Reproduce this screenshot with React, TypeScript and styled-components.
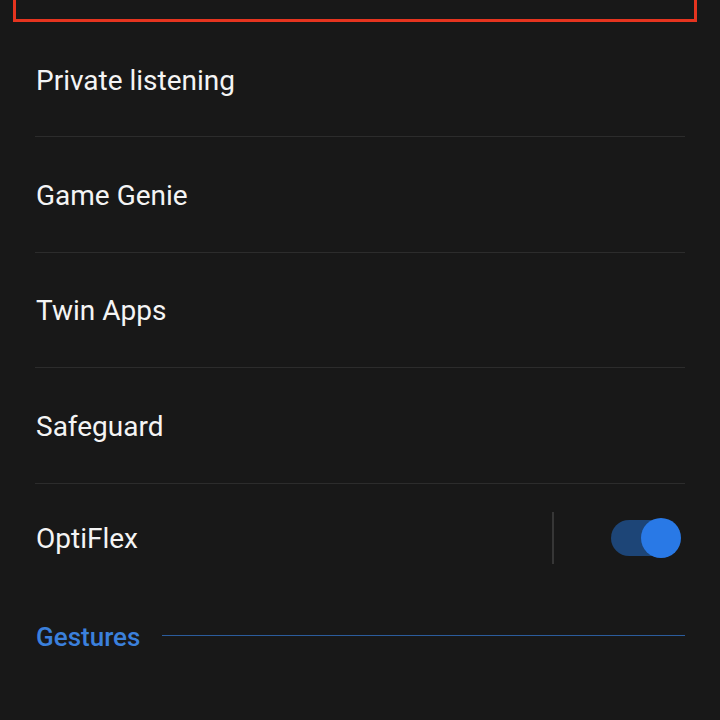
import React from "react";
import styled, { createGlobalStyle } from "styled-components";

const GlobalStyle = createGlobalStyle`
  html, body {
    margin: 0;
    padding: 0;
    background: #181818;
  }
  body {
    font-family: Roboto, "Noto Sans", sans-serif;
    color: #f2f2f2;
    -webkit-font-smoothing: antialiased;
  }
  *, *::before, *::after {
    box-sizing: border-box;
  }
`;

const Screen = styled.div`
  width: 720px;
  height: 720px;
  overflow: hidden;
  background: #181818;
  display: flex;
  flex-direction: column;
`;

const FocusFrame = styled.div`
  margin: 0 23px 0 13px;
  height: 22px;
  border: 3px solid #e5341f;
  border-top: none;
  flex-shrink: 0;
`;

const List = styled.div`
  padding: 0 35px;
  display: flex;
  flex-direction: column;
`;

const Row = styled.div<{ $last?: boolean }>`
  height: ${({ $last }) => ($last ? "114.4px" : "115.4px")};
  display: flex;
  align-items: center;
  padding-bottom: ${({ $last }) => ($last ? "6px" : "0")};
  border-bottom: ${({ $last }) => ($last ? "none" : "1px solid #2c2c2c")};
`;

const Label = styled.span`
  flex: 1;
  font-size: 28px;
  font-weight: 400;
  color: #f4f4f4;
  padding-left: 1px;
  margin-top: 2px;
`;

const Separator = styled.div`
  width: 2px;
  height: 52px;
  background: #363636;
  margin-right: 57px;
`;

const Switch = styled.div<{ $on?: boolean }>`
  position: relative;
  width: 70px;
  height: 40px;
  margin-right: 4px;
  &::before {
    content: "";
    position: absolute;
    left: 0;
    top: 2px;
    width: 58px;
    height: 36px;
    border-radius: 18px;
    background: ${({ $on }) => ($on ? "#1d4577" : "#444")};
  }
  &::after {
    content: "";
    position: absolute;
    top: 0;
    left: ${({ $on }) => ($on ? "30px" : "0")};
    width: 40px;
    height: 40px;
    border-radius: 50%;
    background: ${({ $on }) => ($on ? "#2979e6" : "#bbb")};
  }
`;

const SectionHeader = styled.div`
  display: flex;
  align-items: center;
  gap: 22px;
  height: 76px;
  margin-top: 1px;
`;

const SectionTitle = styled.span`
  font-size: 26px;
  font-weight: 500;
  color: #3b80dc;
  padding-left: 1px;
`;

const SectionLine = styled.div`
  flex: 1;
  height: 1px;
  background: #2b5c9c;
  margin-top: -3px;
`;

const items = ["Private listening", "Game Genie", "Twin Apps", "Safeguard"];

export default function App() {
  return (
    <Screen>
      <GlobalStyle />
      <FocusFrame />
      <List>
        {items.map((name) => (
          <Row key={name}>
            <Label>{name}</Label>
          </Row>
        ))}
        <Row $last>
          <Label>OptiFlex</Label>
          <Separator />
          <Switch $on />
        </Row>
        <SectionHeader>
          <SectionTitle>Gestures</SectionTitle>
          <SectionLine />
        </SectionHeader>
      </List>
    </Screen>
  );
}
